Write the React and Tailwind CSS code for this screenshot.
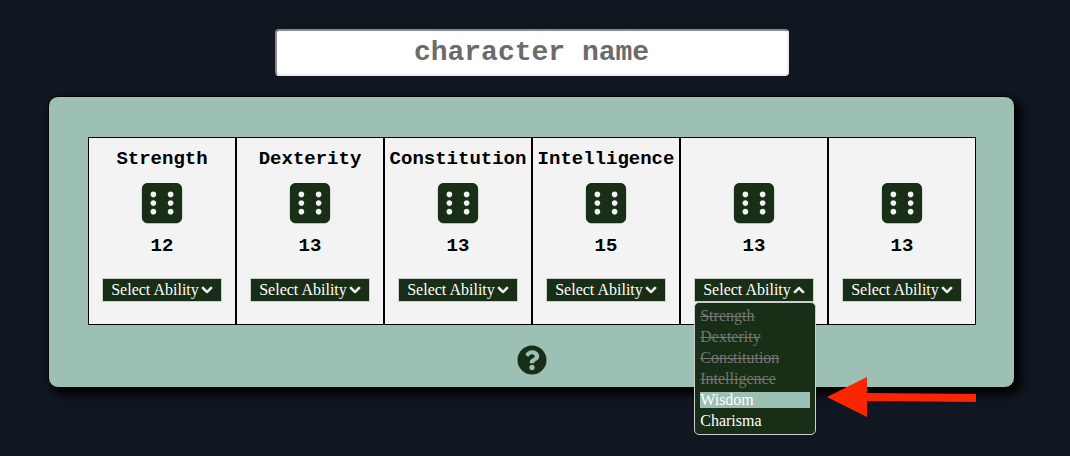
import React, { useState } from 'react';
import { FaDiceSix, FaChevronDown, FaChevronUp, FaQuestionCircle } from 'react-icons/fa';

const ABILITIES = ['Strength', 'Dexterity', 'Constitution', 'Intelligence', 'Wisdom', 'Charisma'];
const ROLLS = [12, 13, 13, 15, 13, 13];

function AbilityMenu({ taken, onPick }) {
  return (
    <ul
      role="listbox"
      aria-label="Abilities"
      className="absolute left-0 top-full z-10 flex w-[122px] flex-col gap-[5px] rounded-[5px] border border-[#cccccc] bg-[#192e16] px-[5px] py-[5px]"
    >
      {ABILITIES.map((ability) => {
        const used = taken.includes(ability);
        const active = ability === 'Wisdom';
        return (
          <li
            key={ability}
            role="option"
            aria-selected={active}
            aria-disabled={used}
            onClick={() => !used && onPick(ability)}
            className={
              used
                ? 'h-4 text-left text-base leading-4 text-[#757575] line-through'
                : active
                  ? 'h-4 cursor-pointer bg-[#9dc0b4] text-left text-base leading-4 text-white'
                  : 'h-4 cursor-pointer text-left text-base leading-4 text-white'
            }
          >
            {ability}
          </li>
        );
      })}
    </ul>
  );
}

function AbilityCard({ name, roll, open, taken, onToggle, onPick }) {
  const Chevron = open ? FaChevronUp : FaChevronDown;
  return (
    <section className="flex min-w-0 flex-1 flex-col items-center border border-black bg-[#f3f3f3] pb-[22px] pt-[9px]">
      <h2 className="h-6 font-['Liberation_Mono',monospace] text-[19px] font-bold leading-6">{name}</h2>
      <button type="button" aria-label="Roll dice" className="mt-[9px] text-[#192e16]">
        <FaDiceSix className="size-[46px]" />
      </button>
      <p className="mt-2 font-['Liberation_Mono',monospace] text-[19px] font-bold leading-6">{roll}</p>
      <div className="relative mt-5">
        <button
          type="button"
          aria-haspopup="listbox"
          aria-expanded={open}
          onClick={onToggle}
          className="flex h-6 items-center gap-[2px] whitespace-nowrap border border-[#cccccc] bg-[#192e16] px-2 text-base leading-5 text-white"
        >
          Select Ability
          <Chevron className="size-3 stroke-white stroke-[32px]" />
        </button>
        {open && <AbilityMenu taken={taken} onPick={onPick} />}
      </div>
    </section>
  );
}

export default function App() {
  const [names, setNames] = useState(['Strength', 'Dexterity', 'Constitution', 'Intelligence', '', '']);
  const [openIndex, setOpenIndex] = useState(4);

  const pick = (index, ability) => {
    setNames(names.map((name, i) => (i === index ? ability : name)));
    setOpenIndex(-1);
  };

  return (
    <main className="min-h-screen bg-[#101720] pb-[67px] pl-12 pr-[55px] pt-[29px] font-['Liberation_Serif',serif] text-black">
      <input
        type="text"
        aria-label="Character name"
        placeholder="character name"
        className="mx-auto block h-[47px] w-full max-w-[514px] rounded-[4px] border-2 border-b-[#ededed] border-l-[#8a8a8a] border-r-[#ededed] border-t-[#8a8a8a] bg-white text-center font-['Liberation_Mono',monospace] text-[28px] font-bold text-[#6b6b6b] outline-none placeholder:text-[#6b6b6b]"
      />
      <div className="relative mt-5 rounded-[10px] border border-black bg-[#9dc0b4] pb-3 pl-[39px] pr-[38px] pt-10 shadow-[5px_5px_10px_1px_#000000]">
        <div className="flex">
          {names.map((name, i) => (
            <AbilityCard
              key={i}
              name={name}
              roll={ROLLS[i]}
              open={openIndex === i}
              taken={names}
              onToggle={() => setOpenIndex(openIndex === i ? -1 : i)}
              onPick={(ability) => pick(i, ability)}
            />
          ))}
        </div>
        <div className="mt-5 flex justify-center">
          <button type="button" aria-label="Help" className="text-[#192e16]">
            <FaQuestionCircle className="size-[30px]" />
          </button>
        </div>
        <svg
          aria-hidden="true"
          viewBox="0 0 150 42"
          className="absolute -bottom-[31px] right-[37px] h-[42px] w-[150px] fill-[#fb2500]"
        >
          <path d="M0 21 40 1v16l109 1v8L40 25v16Z" />
        </svg>
      </div>
    </main>
  );
}
